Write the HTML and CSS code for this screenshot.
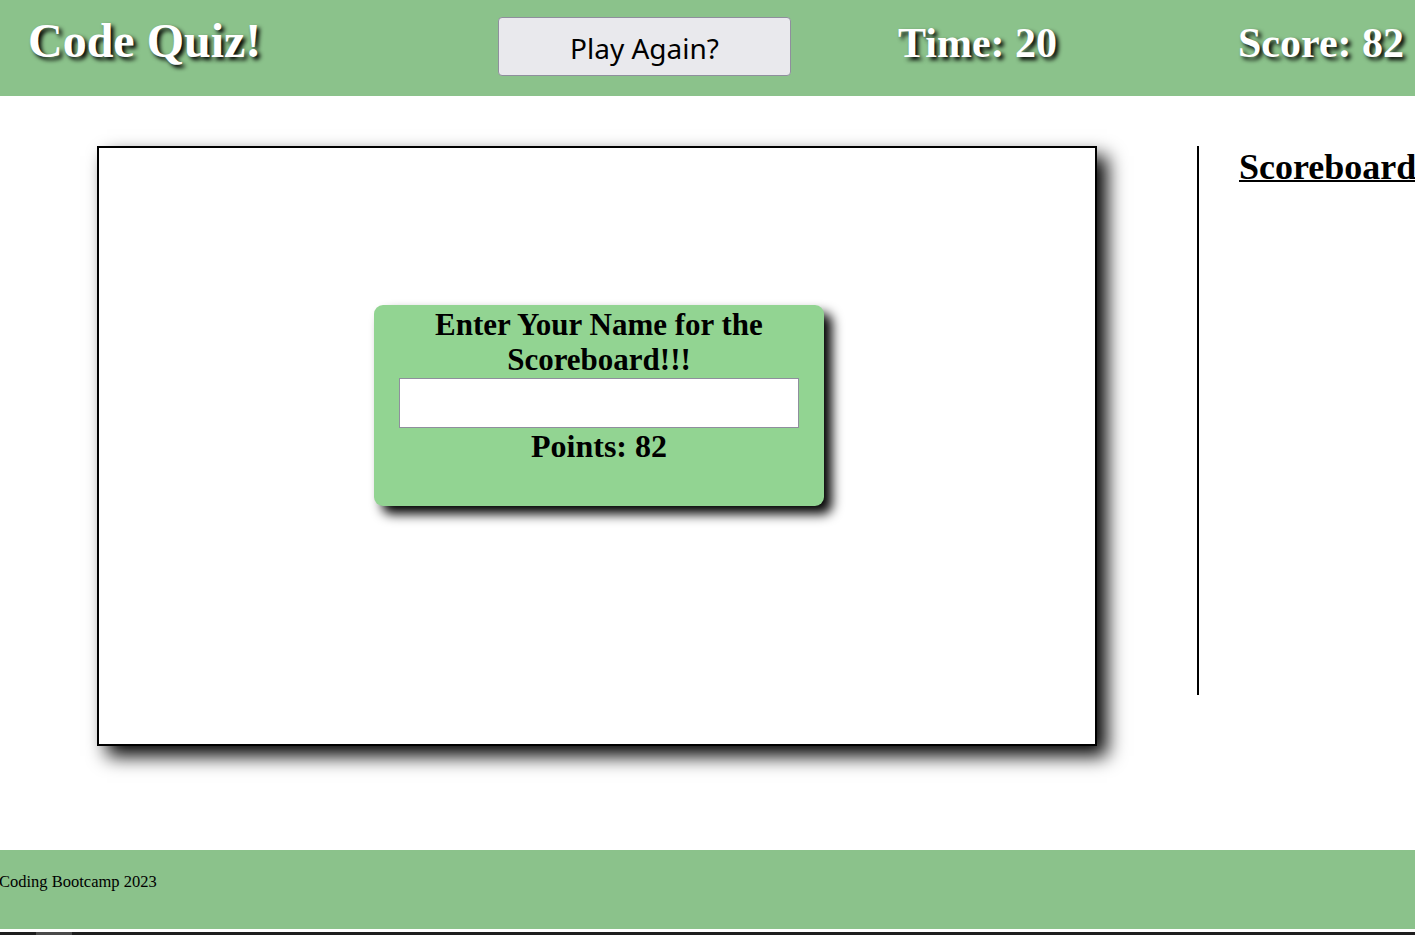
FILE: index.html
```html
<!DOCTYPE html>
<html lang="en">
<head>
<meta charset="utf-8">
<title>Code Quiz</title>
<link rel="stylesheet" href="styles.css">
</head>
<body>
<header class="topbar">
  <h1 class="title">Code Quiz!</h1>
  <div class="btn-cell"><button class="play-btn" type="button">Play Again?</button></div>
  <div class="stat time">Time: 20</div>
  <div class="stat score">Score: 82</div>
</header>
<main class="content">
  <section class="quiz-box">
    <div class="name-card">
      <h3 class="card-title">Enter Your Name for the Scoreboard!!!</h3>
      <input class="name-input" type="text" aria-label="Your name">
      <p class="points">Points: 82</p>
    </div>
  </section>
  <aside class="board">
    <h2 class="board-title">Scoreboard</h2>
  </aside>
</main>
<footer class="foot">
  <p class="foot-text">Coding Bootcamp 2023</p>
</footer>
<div class="hscroll"><div class="hscroll-thumb"></div></div>
</body>
</html>
```
FILE: styles.css
```css
html, body {
  margin: 0;
  padding: 0;
  overflow: hidden;
  background: #ffffff;
}
body {
  font-family: "Liberation Serif", "Times New Roman", serif;
  color: #000;
  width: 1415px;
  height: 935px;
}

.topbar {
  background: #8bc28b;
  height: 96px;
  display: grid;
  grid-template-columns: 470px 400px 340px auto;
  align-items: start;
  padding-left: 28px;
  box-sizing: border-box;
}
.title {
  margin: 0;
  padding-top: 17px;
  font-size: 48px;
  line-height: 1;
  font-weight: bold;
  color: #fff;
  text-shadow: 3px 3px 4px #000;
  white-space: nowrap;
}
.btn-cell {
  padding-top: 17px;
}
.play-btn {
  display: block;
  width: 293px;
  height: 59px;
  background: #e9e9ed;
  border: 1px solid #8f8f9d;
  border-radius: 4px;
  font-family: "Noto Sans", "Open Sans", sans-serif;
  font-size: 28px;
  color: #000;
  padding: 2px 0 0;
}
.stat {
  padding-top: 22px;
  font-size: 42px;
  line-height: 1;
  font-weight: bold;
  color: #fff;
  text-shadow: 3px 3px 4px #000;
  white-space: nowrap;
}

.content {
  display: flex;
  align-items: flex-start;
  gap: 100px;
  padding: 50px 0 104px 97px;
  height: 754px;
  box-sizing: border-box;
}
.quiz-box {
  flex: none;
  width: 1000px;
  height: 600px;
  box-sizing: border-box;
  border: 2px solid #000;
  box-shadow: 10px 10px 18px #000;
  padding-top: 157px;
  background: #fff;
}
.name-card {
  width: 450px;
  height: 201px;
  box-sizing: border-box;
  margin: 0 auto;
  padding: 2px 25px 0;
  background: #92d492;
  border-radius: 9px;
  box-shadow: 8px 8px 12px #000;
  text-align: center;
  position: relative;
  left: 2px;
}
.card-title {
  margin: 0;
  font-size: 31px;
  line-height: 35px;
  font-weight: bold;
}
.name-input {
  display: block;
  width: 400px;
  height: 50px;
  box-sizing: border-box;
  margin: 1px 0 0;
  border: 1px solid #8f8f9d;
  background: #fff;
  padding: 0;
}
.points {
  margin: 1px 0 0;
  font-size: 32px;
  line-height: 35px;
  font-weight: bold;
}

.board {
  flex: none;
  width: 200px;
  height: 549px;
  border-left: 2px solid #000;
  padding-left: 40px;
  padding-top: 3px;
  box-sizing: border-box;
}
.board-title {
  margin: 0;
  font-size: 36px;
  line-height: 1;
  font-weight: bold;
  text-decoration: underline;
  text-decoration-thickness: 2px;
  white-space: nowrap;
}

.foot {
  background: #8bc28b;
  height: 79px;
  padding-top: 22px;
  box-sizing: border-box;
}
.foot-text {
  margin: 0 0 0 -1px;
  font-size: 16.5px;
}

.hscroll {
  position: fixed;
  left: 0;
  right: 0;
  bottom: 0;
  height: 3px;
  background: #1e1e1e;
}
.hscroll-thumb {
  margin-left: 36px;
  width: 36px;
  height: 3px;
  background: #4a4a4a;
}
```
